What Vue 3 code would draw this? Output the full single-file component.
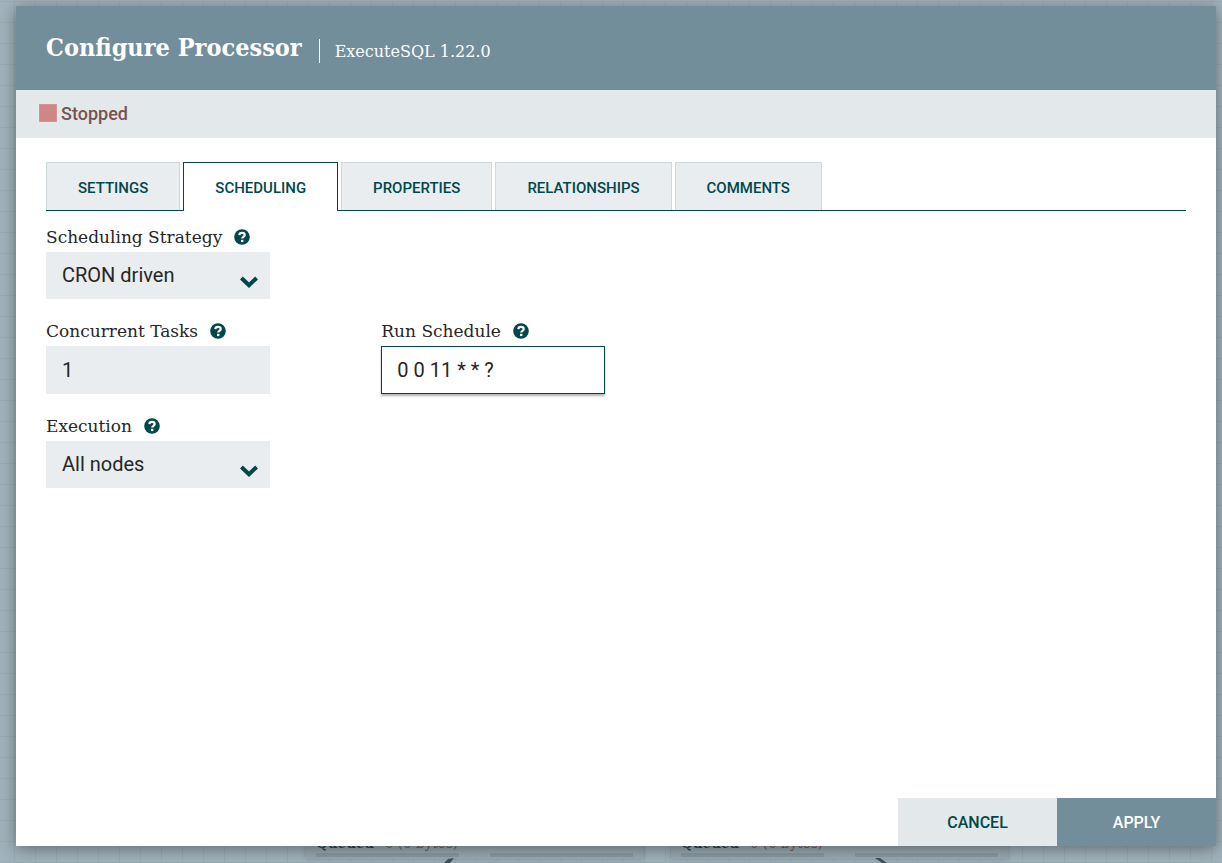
<script setup>
import { ref } from 'vue';

// tabs
const tabs = ['Settings', 'Scheduling', 'Properties', 'Relationships', 'Comments']
const activeTab = ref('Scheduling')

// form data
const formData = ref({
    strategy: 'CRON driven',
    tasks: '1',
    schedule: '0 0 11 * * ?',
    execution: 'All nodes',
})

const strategies = ['Timer driven', 'CRON driven']
const executions = ['All nodes', 'Primary node']

// connections on the canvas behind the dialog
const connections = ['left', 'right']
</script>

<template>
  <div class="page">
    <!-- canvas -->
    <div class="canvas" aria-hidden="true">
      <div v-for="side in connections" :key="side" class="connection" :class="side">
        <div class="queued"><b>Queued</b><span>0 (0 bytes)</span></div>
        <div class="bars">
          <i></i>
          <i></i>
        </div>
      </div>
      <svg class="edge edge-left" width="12" height="5" viewBox="0 0 12 5"><path d="M0 5 L4 1 L10 0 L6 5 Z" /></svg>
      <svg class="edge edge-right" width="12" height="5" viewBox="0 0 12 5"><path d="M0 0 L5 0 L12 5 L7 5 Z" /></svg>
    </div>

    <!-- dialog -->
    <form class="dialog" role="dialog" aria-labelledby="title" @submit.prevent>
      <header class="dialog-header">
        <h1 id="title">Configure Processor</h1>
        <span class="divider"></span>
        <span class="type">ExecuteSQL 1.22.0</span>
      </header>

      <div class="status">
        <span class="stop-icon"></span>
        <span>Stopped</span>
      </div>

      <div class="content">
        <div class="tabs" role="tablist">
          <button
            v-for="tab in tabs"
            :key="tab"
            type="button"
            role="tab"
            :aria-selected="activeTab === tab"
            :class="{ active: activeTab === tab }"
            @click="activeTab = tab"
          >{{ tab }}</button>
        </div>

        <div class="fields">
          <div class="field wide">
            <div class="field-name">
              <label for="strategy">Scheduling Strategy</label>
              <svg class="help" viewBox="0 0 16 16"><circle cx="8" cy="8" r="7.8" /><path d="M5.3 6.1 C5.5 4.4 6.5 3.8 8 3.8 C9.7 3.8 10.7 4.8 10.7 6 C10.7 7.8 8.2 7.8 8.2 9.6" /><rect x="7" y="10.8" width="2.4" height="2.3" /></svg>
            </div>
            <div class="combo">
              <select id="strategy" v-model="formData.strategy">
                <option v-for="item in strategies" :key="item">{{ item }}</option>
              </select>
              <svg class="chevron" viewBox="0 0 18 12"><path d="M1.4 2 L9 9.2 L16.6 2" /></svg>
            </div>
          </div>

          <div class="field">
            <div class="field-name">
              <label for="tasks">Concurrent Tasks</label>
              <svg class="help" viewBox="0 0 16 16"><circle cx="8" cy="8" r="7.8" /><path d="M5.3 6.1 C5.5 4.4 6.5 3.8 8 3.8 C9.7 3.8 10.7 4.8 10.7 6 C10.7 7.8 8.2 7.8 8.2 9.6" /><rect x="7" y="10.8" width="2.4" height="2.3" /></svg>
            </div>
            <input id="tasks" type="text" v-model="formData.tasks" />
          </div>

          <div class="field">
            <div class="field-name">
              <label for="schedule">Run Schedule</label>
              <svg class="help" viewBox="0 0 16 16"><circle cx="8" cy="8" r="7.8" /><path d="M5.3 6.1 C5.5 4.4 6.5 3.8 8 3.8 C9.7 3.8 10.7 4.8 10.7 6 C10.7 7.8 8.2 7.8 8.2 9.6" /><rect x="7" y="10.8" width="2.4" height="2.3" /></svg>
            </div>
            <input id="schedule" class="editing" type="text" v-model="formData.schedule" />
          </div>

          <div class="field wide">
            <div class="field-name">
              <label for="execution">Execution</label>
              <svg class="help" viewBox="0 0 16 16"><circle cx="8" cy="8" r="7.8" /><path d="M5.3 6.1 C5.5 4.4 6.5 3.8 8 3.8 C9.7 3.8 10.7 4.8 10.7 6 C10.7 7.8 8.2 7.8 8.2 9.6" /><rect x="7" y="10.8" width="2.4" height="2.3" /></svg>
            </div>
            <div class="combo">
              <select id="execution" v-model="formData.execution">
                <option v-for="item in executions" :key="item">{{ item }}</option>
              </select>
              <svg class="chevron" viewBox="0 0 18 12"><path d="M1.4 2 L9 9.2 L16.6 2" /></svg>
            </div>
          </div>
        </div>
      </div>

      <footer class="buttons">
        <button type="button" class="cancel">Cancel</button>
        <button type="submit" class="apply">Apply</button>
      </footer>
    </form>
  </div>
</template>

<style>
body {
  margin: 0;
}
</style>

<style scoped>
* {
  box-sizing: border-box;
}

.page {
  position: relative;
  display: flex;
  min-height: 100vh;
  padding: 6px 6px 17px 16px;
  overflow: hidden;
  font-family: Roboto, "Liberation Sans", sans-serif;
  color: #262626;
}

/* canvas */
.canvas {
  position: absolute;
  inset: 0;
  background-color: #a1b2bc;
  background-image:
    linear-gradient(#98abb4 1px, transparent 1px),
    linear-gradient(90deg, #98abb4 1px, transparent 1px);
  background-size: 21px 21px;
  background-position: 14px 1px;
}
.connection {
  position: absolute;
  bottom: 4px;
  width: 337px;
  padding: 0 10px 2px;
  background: #9aaab2;
  box-shadow: 0 0 4px rgba(60, 80, 90, 0.3);
}
.connection.left {
  left: 306px;
}
.connection.right {
  left: 671px;
}
.queued {
  display: flex;
  gap: 11px;
  font-size: 15px;
  line-height: 19px;
  font-family: "Roboto Slab", "DejaVu Serif Condensed", "DejaVu Serif", serif;
  color: #775351;
}
.queued b {
  color: #2f434d;
}
.bars {
  display: flex;
  justify-content: space-between;
}
.bars i {
  width: 143px;
  height: 4px;
  background: #8a9ba3;
}
.edge {
  position: absolute;
  bottom: 0;
  fill: #3f515b;
}
.edge-left {
  left: 444px;
}
.edge-right {
  left: 875px;
}

/* dialog */
.dialog {
  position: relative;
  flex: 1;
  display: flex;
  flex-direction: column;
  background: #fff;
  box-shadow: 0 3px 15px rgba(0, 0, 0, 0.4);
}
.dialog-header {
  display: flex;
  align-items: center;
  height: 84px;
  padding: 0 30px;
  background: #728e9b;
  color: #fff;
  font-family: "Roboto Slab", "DejaVu Serif Condensed", "DejaVu Serif", serif;
}
.dialog-header h1 {
  margin: 0;
  font-size: 25px;
  line-height: 32px;
  font-weight: bold;
}
.divider {
  width: 1px;
  height: 24px;
  margin: 6px 15px 0 17px;
  background: #fff;
}
.type {
  padding-top: 6px;
  font-family: "Roboto Slab", "DejaVu Serif", serif;
  font-size: 16px;
}
.status {
  display: flex;
  align-items: center;
  gap: 4px;
  height: 48px;
  padding: 0 23px 2px;
  background: #e3e8eb;
  color: #775351;
  font-size: 18px;
  font-weight: 500;
}
.stop-icon {
  width: 18px;
  height: 18px;
  border: 1px solid #d49494;
  background: #d18686;
}

/* tabs */
.content {
  flex: 1;
  padding: 24px 30px;
}
.tabs {
  display: flex;
  gap: 3px;
  border-bottom: 1px solid #004849;
}
.tabs button {
  height: 48px;
  padding: 2px 31px 0;
  border: 1px solid #ccdadb;
  border-bottom: 0;
  background: #e9edf0;
  color: #004849;
  font-family: inherit;
  font-size: 15px;
  font-weight: 500;
  text-transform: uppercase;
}
.tabs button.active {
  height: 49px;
  margin-bottom: -1px;
  border-color: #004849;
  background: #fff;
}

/* fields */
.fields {
  display: grid;
  grid-template-columns: 5fr 12fr;
  row-gap: 19px;
  padding-top: 13px;
}
.wide {
  grid-column: 1 / -1;
}
.field-name {
  display: flex;
  align-items: center;
  gap: 12px;
  height: 28px;
  padding-bottom: 3px;
  font-family: "Roboto Slab", "DejaVu Serif", serif;
  font-size: 17px;
}
.help {
  width: 16px;
  height: 16px;
  fill: #004849;
}
.help path {
  fill: none;
  stroke: #fff;
  stroke-width: 2.2;
}
.help rect {
  fill: #fff;
}
.combo {
  position: relative;
  width: 224px;
}
select,
input {
  display: block;
  width: 224px;
  height: 48px;
  padding: 0 15px;
  border: 1px solid #e9edf0;
  border-radius: 0;
  outline: none;
  background: #e9edf0;
  color: #262626;
  font-family: inherit;
  font-size: 20px;
}
select {
  height: 47px;
  padding-bottom: 2px;
  appearance: none;
}
input.editing {
  border-color: #004849;
  background: #fff;
  box-shadow: 0 2px 2px rgba(0, 0, 0, 0.3);
}
.chevron {
  position: absolute;
  right: 12px;
  bottom: 11px;
  width: 18px;
  height: 12px;
  pointer-events: none;
}
.chevron path {
  fill: none;
  stroke: #004849;
  stroke-width: 4;
}

/* buttons */
.buttons {
  display: flex;
  justify-content: flex-end;
}
.buttons button {
  width: 159px;
  height: 48px;
  border: 0;
  font-family: inherit;
  font-size: 16px;
  font-weight: 500;
  text-transform: uppercase;
}
.cancel {
  background: #e3e8eb;
  color: #004849;
}
.apply {
  background: #728e9b;
  color: #fff;
}
</style>
